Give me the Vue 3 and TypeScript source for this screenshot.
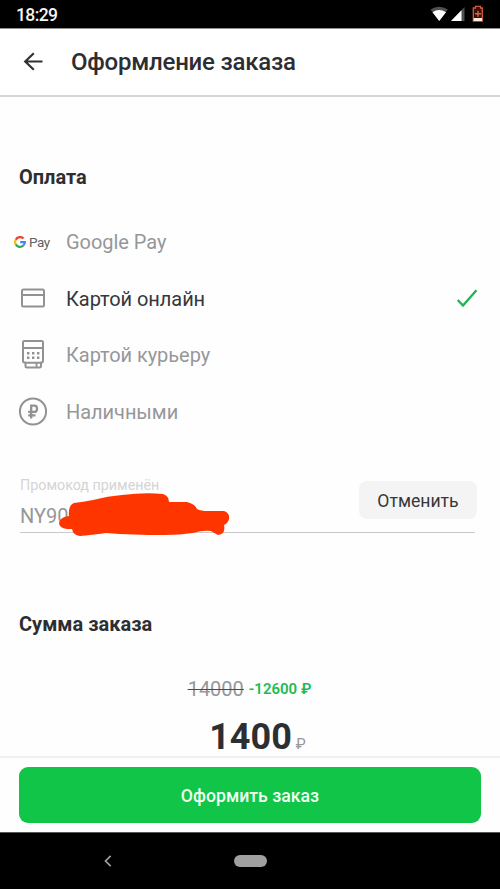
<script setup lang="ts">
import { ref } from 'vue'

type MethodId = 'gpay' | 'online' | 'courier' | 'cash'
interface Method {
  id: MethodId
  label: string
}

const methods: Method[] = [
  { id: 'gpay', label: 'Google Pay' },
  { id: 'online', label: 'Картой онлайн' },
  { id: 'courier', label: 'Картой курьеру' },
  { id: 'cash', label: 'Наличными' },
]
const selected = ref<MethodId>('online')
</script>

<template>
  <div class="screen">
    <div class="status">
      <span class="time">18:29</span>
      <svg class="status-icons" width="56" height="18" viewBox="0 0 56 18">
        <path d="M0.5 4.5Q9 -1.2 17.8 4.5L9.2 16Z" fill="#505050" />
        <path d="M2.500 7.200Q9 2.600 16 7.200L9.200 16Z" fill="#fff" />
        <path d="M21 16L34.500 2V16Z" fill="#505050" />
        <path d="M21 16L31.500 5.200V16Z" fill="#fff" />
        <path d="M45.500 3V1.300H50.500V3H52.300V16H43.300V3Z" fill="#331009" stroke="#d85a3c" stroke-width="1.300" />
        <path d="M48 5.800V11.800M45 8.800H51" stroke="#e06040" stroke-width="1.400" />
        <path d="M43.600 13H52V16H43.600Z" fill="#ffe9dd" />
      </svg>
    </div>

    <header class="header">
      <svg class="back" width="20" height="20" viewBox="0 0 20 20" fill="none" stroke="#303134" stroke-width="2.200">
        <path d="M19.500 9.500H2M10.800 1.200L2.200 9.500L10.800 17.800" />
      </svg>
      <h1 class="title">Оформление заказа</h1>
    </header>

    <main class="content">
      <h2 class="section-title">Оплата</h2>
      <ul class="methods">
        <li
          v-for="m in methods"
          :key="m.id"
          class="method"
          :class="{ active: selected === m.id }"
          @click="selected = m.id"
        >
          <span class="method-icon">
            <span v-if="m.id === 'gpay'" class="gpay">
              <svg width="12" height="12" viewBox="0 0 12 12" fill="none" stroke-width="2.200">
                <path d="M9.500 2.500A4.900 4.900 0 0 0 1.700 3.700" stroke="#ea4335" />
                <path d="M1.700 3.700A4.900 4.900 0 0 0 1.700 8.300" stroke="#fbbc05" />
                <path d="M1.700 8.300A4.900 4.900 0 0 0 9.200 9.700" stroke="#34a853" />
                <path d="M9.200 9.700Q10.900 8.200 10.900 6.100H6.200" stroke="#4285f4" />
              </svg>
              <span class="gpay-text">Pay</span>
            </span>
            <svg v-else-if="m.id === 'online'" width="30" height="30" viewBox="0 0 30 30" fill="none" stroke="#929294" stroke-width="2">
              <rect x="4" y="5.500" width="22" height="17" rx="1.500" />
              <path d="M4 11H26" />
            </svg>
            <svg v-else-if="m.id === 'courier'" width="30" height="30" viewBox="0 0 30 30" fill="none" stroke="#929294" stroke-width="2">
              <path d="M7.500 22.500H6.300Q5 22.500 5 21V2.200Q5 1 6.300 1H23.700Q25 1 25 2.200V21Q25 22.500 23.700 22.500H22.500" />
              <path d="M5 8H25" />
              <path d="M7.500 22.700H23V26Q23 27.500 21.500 27.500H9Q7.500 27.500 7.500 26Z" />
              <path d="M18.500 22.700V27.500" stroke-width="1.800" />
              <path d="M9 13.200H21.500M9 17.800H21.500" stroke-width="2.400" stroke-dasharray="2.400 2.600" />
            </svg>
            <svg v-else width="30" height="30" viewBox="0 0 30 30" fill="none" stroke="#929294" stroke-width="2">
              <circle cx="15" cy="14.500" r="13.100" />
              <path d="M13.200 21.500V8.700H16.300Q19 8.700 19 11.800T16.300 14.900H10.200M10.200 18.300H17.500" stroke-width="2.300" />
            </svg>
          </span>
          <span class="method-label">{{ m.label }}</span>
          <svg v-if="selected === m.id" class="check" width="22" height="20" viewBox="0 0 22 20" fill="none" stroke="#22b455" stroke-width="2.400">
            <path d="M1.700 11L7 16.500L20.500 1.200" />
          </svg>
        </li>
      </ul>

      <div class="promo">
        <div class="promo-field">
          <span class="promo-label">Промокод применён</span>
          <span class="promo-code">NY90</span>
        </div>
        <button class="cancel">Отменить</button>
        <svg class="scribble" width="172" height="46" viewBox="58 491 172 46">
          <path
            d="M74 503Q83 502 93 500Q108 496 122 495Q145 492 163 494Q169 496 169 502H187Q195 504 197 509Q201 511 208 511H224Q230 513 229 519Q228 523 224 525Q226 534 218 535Q214 533 211 531Q203 530 193 533Q180 535 165 535Q132 535 106 533Q91 535 80 536Q73 535 72 529H67Q59 528 59 523Q60 517 69 516Q68 505 74 503Z"
            fill="#ff3500"
          />
        </svg>
      </div>

      <h2 class="section-title sum-title">Сумма заказа</h2>
      <div class="discount">
        <span class="old">14000</span>
        <span class="minus">-12600 ₽</span>
      </div>
      <div class="total">
        <span class="total-value">1400</span>
        <span class="total-cur">₽</span>
      </div>
    </main>

    <footer class="footer">
      <button class="submit">Оформить заказ</button>
    </footer>

    <nav class="navbar">
      <svg class="nav-back" width="8" height="12" viewBox="0 0 8 12" fill="none" stroke="#a0a0a0" stroke-width="1.700">
        <path d="M6.700 0.800L1.500 6L6.700 11.200" />
      </svg>
      <span class="home"></span>
    </nav>
  </div>
</template>

<style>
body {
  margin: 0;
  background: #fefefe;
}
</style>

<style scoped>
* {
  box-sizing: border-box;
}
.screen {
  width: 500px;
  height: 889px;
  display: flex;
  flex-direction: column;
  overflow: hidden;
  background: #fefefe;
  color: #2d2e31;
  font-family: Roboto, "Noto Sans", sans-serif;
  white-space: nowrap;
}
.status {
  height: 28px;
  flex: none;
  display: flex;
  align-items: center;
  justify-content: space-between;
  padding: 0 14px 0 16px;
  background: #000;
  color: #f4f4f4;
}
.time {
  padding-top: 2px;
  font-size: 17.500px;
  font-weight: 500;
  line-height: 20px;
  letter-spacing: -0.600px;
}
.header {
  height: 69px;
  flex: none;
  display: flex;
  align-items: center;
  padding: 0 0 0 23px;
  border-top: 1px solid #929292;
  border-bottom: 2px solid #d7d7d7;
  background: #fff;
}
.title {
  margin: 0 0 0 28px;
  font-size: 24px;
  font-weight: 500;
  line-height: 30px;
  letter-spacing: -0.230px;
}
.content {
  flex: 1;
  min-height: 0;
  padding: 66px 0 0;
}
.section-title {
  margin: 0;
  padding-left: 19px;
  font-size: 20px;
  font-weight: 700;
  line-height: 28px;
}
.methods {
  margin: 23px 0 0;
  padding: 0;
  list-style: none;
}
.method {
  height: 56.500px;
  display: flex;
  align-items: center;
  padding: 0 22px 0 13px;
  color: #96979a;
}
.method.active {
  color: #36373a;
}
.method-icon {
  width: 53px;
  flex: none;
  display: flex;
  padding-left: 5px;
}
.gpay {
  display: flex;
  align-items: center;
  gap: 3px;
  margin-left: -4px;
}
.gpay-text {
  color: #606164;
  font-size: 13.500px;
  line-height: 16px;
  letter-spacing: -0.500px;
}
.method-label {
  flex: 1;
  font-size: 20px;
  line-height: 28px;
  letter-spacing: -0.050px;
}
.promo {
  position: relative;
  height: 63px;
  margin: 30px 25px 0 20px;
  border-bottom: 1px solid #c9c9c9;
  display: flex;
  justify-content: space-between;
}
.promo-field {
  display: flex;
  flex-direction: column;
  padding-top: 6px;
}
.promo-label {
  color: #d4d4d5;
  font-size: 14.300px;
  line-height: 18px;
}
.promo-code {
  margin-top: 8px;
  color: #96979a;
  font-size: 20px;
  line-height: 28px;
}
.cancel {
  width: 118px;
  height: 38px;
  margin: 11px -2px 0 0;
  padding: 2px 0 0;
  border: 0;
  border-radius: 8px;
  background: #f4f4f4;
  color: #36373a;
  font: 400 17.600px/36px Roboto, "Noto Sans", sans-serif;
}
.scribble {
  position: absolute;
  left: 38px;
  top: 21px;
}
.sum-title {
  margin-top: 77px;
}
.discount {
  display: flex;
  justify-content: center;
  align-items: center;
  gap: 5px;
  margin-top: 37px;
  padding-right: 1px;
  line-height: 26px;
}
.old {
  color: #96979a;
  font-size: 20px;
  text-decoration: line-through;
  text-decoration-color: #4a4b4e;
  text-decoration-thickness: 1px;
}
.minus {
  padding-top: 1px;
  color: #1fbb50;
  font-size: 15px;
  font-weight: 600;
}
.total {
  display: flex;
  justify-content: center;
  align-items: baseline;
  gap: 4px;
  margin-top: 13px;
  padding-left: 15px;
  line-height: 44px;
}
.total-value {
  font-size: 36px;
  font-weight: 700;
}
.total-cur {
  color: #96979a;
  font-size: 15px;
}
.footer {
  height: 76px;
  flex: none;
  padding: 9px 19px 0;
  border-top: 2px solid #f1f1f1;
  background: #fefefe;
}
.submit {
  width: 462px;
  height: 56px;
  padding: 2px 0 0;
  border: 0;
  border-radius: 9px;
  background: #10c548;
  color: #effff2;
  font: 500 17.700px/54px Roboto, "Noto Sans", sans-serif;
}
.navbar {
  height: 57px;
  flex: none;
  display: flex;
  align-items: center;
  padding-left: 104px;
  border-top: 1px solid #555;
  background: #000;
}
.home {
  width: 33px;
  height: 12px;
  margin-left: 122px;
  border-radius: 6px;
  background: #a0a0a0;
}
</style>
